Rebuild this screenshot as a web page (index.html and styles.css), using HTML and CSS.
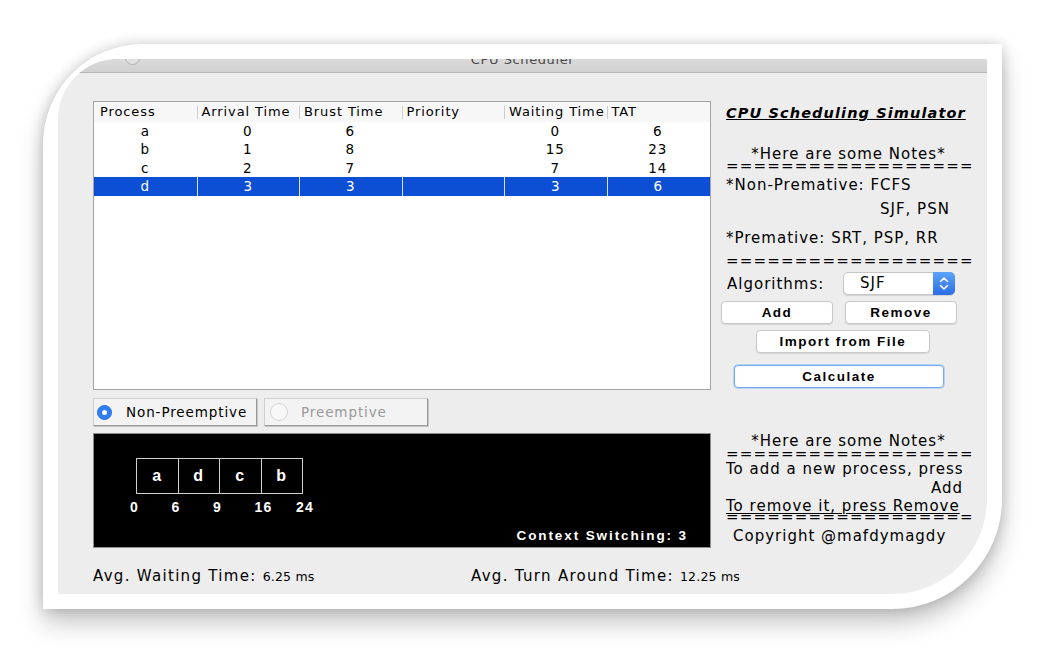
FILE: index.html
```html
<!DOCTYPE html>
<html>
<head>
<meta charset="utf-8">
<title>CPU Scheduler</title>
<link rel="stylesheet" href="styles.css">
</head>
<body>
<div class="frame">
  <div class="window">
    <div class="titlebar">
      <span class="close"></span>
      <span class="title">CPU Scheduler</span>
    </div>
    <div class="content">
      <div class="left">
        <div class="table">
          <div class="thead">
            <div class="th">Process</div>
            <div class="th sep">Arrival Time</div>
            <div class="th sep">Brust Time</div>
            <div class="th sep">Priority</div>
            <div class="th sep">Waiting Time</div>
            <div class="th sep">TAT</div>
          </div>
          <div class="tr"><div class="td">a</div><div class="td">0</div><div class="td">6</div><div class="td"></div><div class="td">0</div><div class="td">6</div></div>
          <div class="tr"><div class="td">b</div><div class="td">1</div><div class="td">8</div><div class="td"></div><div class="td">15</div><div class="td">23</div></div>
          <div class="tr"><div class="td">c</div><div class="td">2</div><div class="td">7</div><div class="td"></div><div class="td">7</div><div class="td">14</div></div>
          <div class="tr selected"><div class="td">d</div><div class="td">3</div><div class="td">3</div><div class="td"></div><div class="td">3</div><div class="td">6</div></div>
        </div>
        <div class="modes">
          <div class="mode"><span class="radio on"></span><span class="mode-label">Non-Preemptive</span></div>
          <div class="mode disabled"><span class="radio"></span><span class="mode-label">Preemptive</span></div>
        </div>
        <div class="gantt">
          <div class="boxes">
            <div class="box">a</div><div class="box">d</div><div class="box">c</div><div class="box">b</div>
          </div>
          <div class="ticks">
            <span class="tick">0</span><span class="tick">6</span><span class="tick">9</span><span class="tick">16</span><span class="tick">24</span>
          </div>
          <div class="ctx">Context Switching: 3</div>
        </div>
      </div>
      <div class="right">
        <div class="app-title">CPU Scheduling Simulator</div>
        <div class="line center notes1">*Here are some Notes*</div>
        <div class="eq">==================</div>
        <div class="line nonpre">*Non-Premative: FCFS</div>
        <div class="line sjf">SJF, PSN</div>
        <div class="line pre">*Premative: SRT, PSP, RR</div>
        <div class="eq eq2">==================</div>
        <div class="algo">
          <span class="algo-label">Algorithms:</span>
          <div class="combo">
            <span class="combo-value">SJF</span>
            <span class="combo-arrow">
              <svg width="22" height="23" viewBox="0 0 22 23"><path d="M7.5 9.5 L11 6 L14.5 9.5 M7.5 13.5 L11 17 L14.5 13.5" fill="none" stroke="#fff" stroke-width="1.6" stroke-linecap="round" stroke-linejoin="round"/></svg>
            </span>
          </div>
        </div>
        <div class="btn-row">
          <div class="btn">Add</div>
          <div class="btn">Remove</div>
        </div>
        <div class="btn import">Import from File</div>
        <div class="btn calc">Calculate</div>
        <div class="line center notes2">*Here are some Notes*</div>
        <div class="eq eq3">==================</div>
        <div class="line addline">To add a new process, press</div>
        <div class="line add-right">Add</div>
        <div class="line remline">To remove it, press Remove</div>
        <div class="eq eq4">==================</div>
        <div class="line copy">Copyright @mafdymagdy</div>
      </div>
    </div>
    <div class="averages">
      <div class="avg first"><span class="avg-label">Avg. Waiting Time:</span> <span class="avg-val">6.25 ms</span></div>
      <div class="avg"><span class="avg-label">Avg. Turn Around Time:</span> <span class="avg-val">12.25 ms</span></div>
    </div>
  </div>
</div>
</body>
</html>
```
FILE: styles.css
```css
html, body {
  margin: 0;
  padding: 0;
  background: #ffffff;
}
body {
  width: 1043px;
  height: 650px;
  overflow: hidden;
  padding-top: 44px;
  box-sizing: border-box;
  font-family: "DejaVu Sans", "Noto Sans", sans-serif;
  color: #000;
}
.frame {
  margin-left: 43px;
  width: 959px;
  height: 565px;
  box-sizing: border-box;
  padding: 15px;
  background: #fff;
  border-radius: 100px 0 110px 0;
  box-shadow: 0 14px 24px rgba(0,0,0,0.22), 0 0 14px rgba(0,0,0,0.18);
}
.window {
  width: 929px;
  height: 535px;
  background: #ededed;
  border-radius: 60px 0 95px 0;
  overflow: hidden;
}
.titlebar {
  position: relative;
  height: 13px;
  background: linear-gradient(#dadada, #d1d1d1);
  border-bottom: 1px solid #b5b5b5;
  overflow: hidden;
  display: flex;
  justify-content: center;
}
.close {
  position: absolute;
  left: 67px;
  top: -9px;
  width: 13px;
  height: 13px;
  border-radius: 50%;
  border: 1px solid #b0b0b0;
  background: #e0e0e0;
}
.title {
  font-size: 13px;
  line-height: 13px;
  margin-top: -6px;
  color: #4a4a4a;
  letter-spacing: 0.6px;
}
.content {
  display: flex;
  padding: 28px 0 0 35px;
}
.left {
  width: 618px;
}
.table {
  height: 289px;
  box-sizing: border-box;
  border: 1px solid #a3a3a3;
  background: #fff;
  font-size: 13px;
  letter-spacing: 0.9px;
}
.thead, .tr {
  display: grid;
  grid-template-columns: repeat(6, 102.5px);
}
.thead {
  height: 20px;
  background: #f7f7f7;
}
.th {
  padding-left: 6px;
  line-height: 20px;
  white-space: nowrap;
}
.th.sep {
  padding-left: 5px;
  background: linear-gradient(#cdcdcd, #cdcdcd) left center / 1px 13px no-repeat;
}
.tr {
  height: 18.4px;
}
.td {
  text-align: center;
  line-height: 18.4px;
  font-size: 13.5px;
}
.tr.selected {
  background: #0d4fd4;
  color: #fff;
}
.tr.selected .td + .td {
  border-left: 1px solid #d8e2f6;
}
.modes {
  display: flex;
  gap: 7px;
  margin-top: 8px;
}
.mode {
  width: 164px;
  height: 28px;
  box-sizing: border-box;
  display: flex;
  align-items: center;
  background: #f3f3f3;
  border: 1px solid #cfcfcf;
  border-right-color: #9a9a9a;
  border-bottom-color: #9a9a9a;
  box-shadow: 1px 1px 0 #c4c4c4;
  font-size: 13.5px;
  letter-spacing: 0.9px;
}
.radio {
  width: 15px;
  height: 15px;
  border-radius: 50%;
  margin-left: 3px;
  margin-right: 14px;
  box-sizing: border-box;
  border: 1px solid #d6d6d6;
  background: #f8f8f8;
  display: flex;
  align-items: center;
  justify-content: center;
}
.radio.on {
  background: #2f7ef3;
  border-color: #2a6fe0;
}
.radio.on::after {
  content: "";
  width: 5px;
  height: 5px;
  border-radius: 50%;
  background: #fff;
}
.mode.disabled {
  color: #9a9a9a;
}
.mode.disabled .radio {
  margin-left: 5px;
  margin-right: 13px;
  width: 18px;
  height: 18px;
}
.gantt {
  margin-top: 7px;
  height: 115px;
  box-sizing: border-box;
  border: 1px solid #8c8c8c;
  background: #000;
  color: #fff;
  font-family: "Liberation Sans", Arial, sans-serif;
  font-weight: bold;
  display: flex;
  flex-direction: column;
}
.boxes {
  display: flex;
  margin: 24px 0 0 42px;
}
.box {
  width: 42.5px;
  height: 36px;
  box-sizing: border-box;
  border: 1px solid #d0d0d0;
  margin-right: -1px;
  display: flex;
  align-items: center;
  justify-content: center;
  font-size: 16px;
  letter-spacing: 1px;
}
.ticks {
  display: flex;
  margin: 6px 0 0 36px;
  height: 15px;
  line-height: 15px;
  font-size: 14px;
  letter-spacing: 1.3px;
}
.tick {
  width: 41.5px;
}
.ctx {
  margin-top: auto;
  align-self: flex-end;
  padding: 0 22px 3px 0;
  font-size: 13.5px;
  letter-spacing: 1.9px;
  line-height: 16px;
}
.right {
  margin-left: 10px;
  width: 255px;
  font-size: 15px;
  letter-spacing: 1px;
}
.line {
  height: 18px;
  line-height: 18px;
  white-space: nowrap;
  padding-left: 5px;
}
.center {
  text-align: center;
  padding-left: 0;
}
.app-title {
  margin-top: 3px;
  height: 18px;
  line-height: 18px;
  padding-left: 5px;
  font-size: 14.5px;
  font-weight: bold;
  font-style: italic;
  text-decoration: underline;
  letter-spacing: 1.1px;
  white-space: nowrap;
}
.notes1 { margin-top: 23px; }
.eq {
  height: 6px;
  line-height: 6px;
  padding-left: 5px;
  font-size: 15px;
  letter-spacing: 1.2px;
  white-space: nowrap;
}
.nonpre { margin-top: 7px; }
.sjf { margin-top: 6px; padding-left: 159px; }
.pre { margin-top: 11px; }
.eq2 { margin-top: 11px; }
.algo {
  margin-top: 8px;
  display: flex;
  align-items: center;
  height: 23px;
}
.algo-label {
  padding-left: 6px;
  width: 116px;
}
.combo {
  width: 112px;
  height: 23px;
  box-sizing: border-box;
  display: flex;
  background: #fff;
  border: 1px solid #c6c6c6;
  border-radius: 5px;
  box-shadow: 0 1px 1px rgba(0,0,0,0.12);
}
.combo-value {
  flex: 1;
  padding-left: 16px;
  line-height: 21px;
}
.combo-arrow {
  width: 22px;
  margin: -1px -1px -1px 0;
  height: 23px;
  border-radius: 0 5px 5px 0;
  background: linear-gradient(#5ea3fa, #2a6de5);
  display: flex;
}
.btn-row {
  display: flex;
  gap: 12px;
  margin-top: 6px;
}
.btn {
  width: 112px;
  height: 23px;
  box-sizing: border-box;
  background: #fff;
  border: 1px solid #c9c9c9;
  border-radius: 4px;
  box-shadow: 0 1px 1px rgba(0,0,0,0.1);
  font-family: "Liberation Sans", Arial, sans-serif;
  font-weight: bold;
  font-size: 13.5px;
  letter-spacing: 1.5px;
  text-align: center;
  line-height: 21px;
}
.import {
  width: 174px;
  margin: 6px 0 0 35px;
}
.calc {
  width: 210px;
  margin: 12px 0 0 13px;
  border: 1px solid #79a8ec;
  box-shadow: 0 0 0 1px #b9d3f7;
}
.notes2 { margin-top: 44px; }
.eq3 { margin-top: 1px; }
.addline { margin-top: 3px; }
.add-right { margin-top: 1px; text-align: right; padding-right: 13px; }
.remline { text-decoration: underline; text-underline-offset: 2px; }
.eq4 { margin-top: -1px; }
.copy { margin-top: 7px; padding-left: 12px; }
.averages {
  display: flex;
  margin-top: 19px;
  padding-left: 35px;
  height: 18px;
  line-height: 18px;
  font-size: 15px;
  letter-spacing: 1.3px;
}
.avg.first {
  width: 378px;
}
.avg-val {
  font-size: 12.5px;
  letter-spacing: 0.2px;
}
```
